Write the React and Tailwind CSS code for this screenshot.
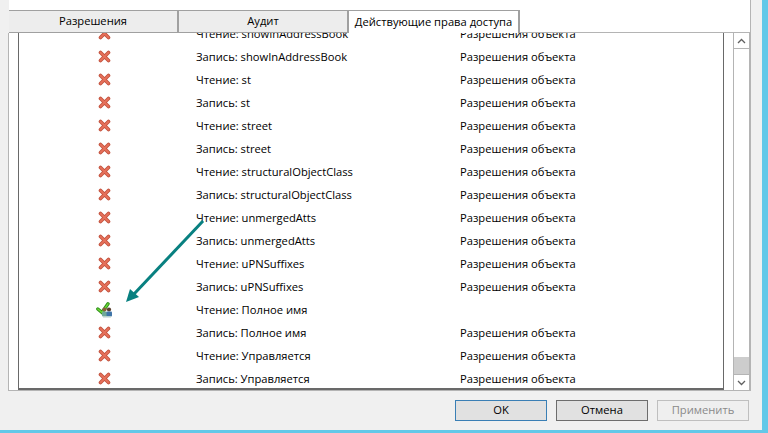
import React from 'react';

const rows = [
  ['Чтение: showInAddressBook', 'Разрешения объекта'],
  ['Запись: showInAddressBook', 'Разрешения объекта'],
  ['Чтение: st', 'Разрешения объекта'],
  ['Запись: st', 'Разрешения объекта'],
  ['Чтение: street', 'Разрешения объекта'],
  ['Запись: street', 'Разрешения объекта'],
  ['Чтение: structuralObjectClass', 'Разрешения объекта'],
  ['Запись: structuralObjectClass', 'Разрешения объекта'],
  ['Чтение: unmergedAtts', 'Разрешения объекта'],
  ['Запись: unmergedAtts', 'Разрешения объекта'],
  ['Чтение: uPNSuffixes', 'Разрешения объекта'],
  ['Запись: uPNSuffixes', 'Разрешения объекта'],
  ['Чтение: Полное имя', '', true],
  ['Запись: Полное имя', 'Разрешения объекта'],
  ['Чтение: Управляется', 'Разрешения объекта'],
  ['Запись: Управляется', 'Разрешения объекта'],
];

const DenyIcon = () => (
  <svg width="13" height="13" viewBox="0 0 13 13" className="-mt-[2px]">
    <path d="M2.5 2.5 L10.5 10.5 M10.5 2.5 L2.5 10.5" stroke="#c0503c" strokeWidth="3.6" strokeLinecap="round" />
    <path d="M2.5 2.5 L10.5 10.5 M10.5 2.5 L2.5 10.5" stroke="#e6705a" strokeWidth="1.8" strokeLinecap="round" />
  </svg>
);

const AllowIcon = () => (
  <svg width="17" height="16" viewBox="0 0 17 16" className="-mt-px">
    <path d="M1.8 7 L6 10.5 L12 1.8" fill="none" stroke="#2f8f1c" strokeWidth="3.4" strokeLinecap="round" />
    <path d="M1.8 7 L6 10.5 L12 1.8" fill="none" stroke="#6fdc34" strokeWidth="1.4" strokeLinecap="round" />
    <circle cx="8.5" cy="7.5" r="2.1" fill="#8a5c3c" />
    <circle cx="13" cy="7.5" r="2.1" fill="#5a3e2c" />
    <rect x="6" y="9.5" width="5" height="5" rx="1" fill="#6fa898" />
    <rect x="10.5" y="9.5" width="5.5" height="5" rx="1" fill="#3f74a8" />
    <rect x="7" y="14" width="8" height="1.5" fill="#b8d0cc" />
  </svg>
);

const Tab = ({ label, active, width }) => (
  <div
    className={`flex items-center justify-center h-[23px] whitespace-nowrap border-t border-t-[#a0a0a0] border-r-2 border-r-[#a0a0a0] ${width} ${
      active ? 'bg-white' : 'bg-[#ededed] border-b border-b-[#a0a0a0]'
    }`}
  >
    {label}
  </div>
);

const Button = ({ label, className }) => (
  <div className={`flex items-center justify-center w-[92px] h-[21px] border ${className}`}>{label}</div>
);

export default function App() {
  return (
    <div
      className="relative w-[768px] h-[433px] overflow-hidden bg-[#f0f0f0] text-[11.2px] text-black flex flex-col"
      style={{ fontFamily: '"Open Sans", "Noto Sans", sans-serif' }}
    >
      <div className="flex-1 flex flex-col pl-[8px] pr-[17px] min-h-0">
        <div className="h-[10px] ml-px bg-white border-r border-r-[#b4b4b4]" />
        <div className="flex ml-px bg-white border-r border-r-[#b4b4b4]">
          <Tab label="Разрешения" width="w-[170px]" />
          <Tab label="Аудит" width="w-[170px]" />
          <Tab label="Действующие права доступа" width="w-[171px]" active />
          <div className="flex-1 border-b border-b-[#b4b4b4]" />
        </div>
        <div className="h-[358px] flex bg-white border border-t-0 border-[#b4b4b4] pl-[9px] overflow-hidden">
          <div className="w-[706px] h-[357px] border-l border-b-2 border-r border-[#696969] overflow-hidden">
            <div className="-mt-[10px]">
              {rows.map(([name, source, allowed], i) => (
                <div key={i} className="flex items-center h-[23px]">
                  <div className="w-[177px] shrink-0 pr-[7px] flex justify-center">
                    {allowed ? <AllowIcon /> : <DenyIcon />}
                  </div>
                  <div className="w-[264px] shrink-0 whitespace-nowrap">{name}</div>
                  <div className="whitespace-nowrap">{source}</div>
                </div>
              ))}
            </div>
          </div>
          <div className="ml-[9px] w-[17px] h-[358px] border-x border-[#b4b4b4] flex flex-col">
            <div className="h-[16px] flex items-center justify-center border-b border-[#b4b4b4]">
              <svg width="9" height="6" viewBox="0 0 9 6"><path d="M1 5 L4.5 1.5 L8 5" fill="none" stroke="#606060" strokeWidth="1.3" /></svg>
            </div>
            <div className="flex-1" />
            <div className="h-[17px] bg-[#cdcdcd]" />
            <div className="h-[17px] flex items-center justify-center border-t border-[#b4b4b4]">
              <svg width="9" height="6" viewBox="0 0 9 6"><path d="M1 1 L4.5 4.5 L8 1" fill="none" stroke="#606060" strokeWidth="1.3" /></svg>
            </div>
          </div>
        </div>
        <div className="flex justify-end gap-[9px] mt-[9px] pr-[2px]">
          <Button label="OK" className="border-[#3a7fb5] bg-[#e1e1e1]" />
          <Button label="Отмена" className="border-[#6d6d6d] bg-[#e1e1e1]" />
          <Button label="Применить" className="border-[#bfbfbf] bg-[#efefef] text-[#8a8a8a]" />
        </div>
      </div>
      <div className="h-[3px] bg-[#63c8e8]" />
      <div className="absolute right-0 top-0 bottom-0 w-[6px] bg-[#63c8e8]" />
      <svg className="absolute left-[120px] top-[215px]" width="90" height="90" viewBox="0 0 90 90">
        <path d="M83 6 L14 79" stroke="#088080" strokeWidth="3" />
        <path d="M6 87 L10 74 L19 82 Z" fill="#088080" />
      </svg>
    </div>
  );
}
